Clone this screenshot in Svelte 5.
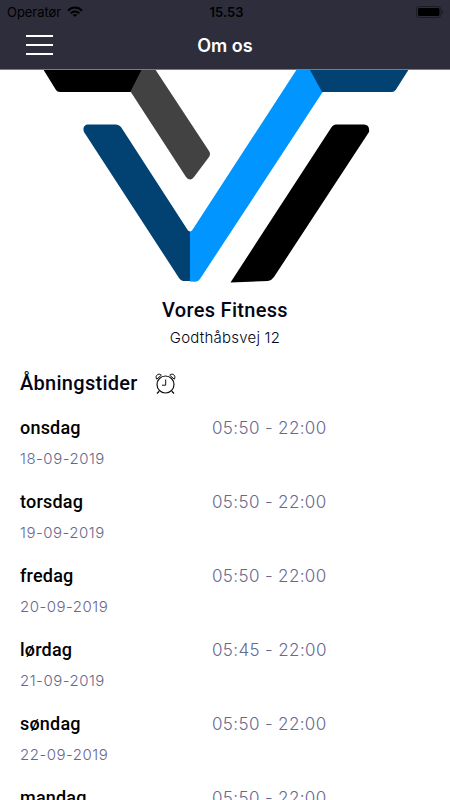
<script lang="ts">
	// Opening hours for the coming days
	const openingHours = [
		{ day: 'onsdag', date: '18-09-2019', hours: '05:50 - 22:00' },
		{ day: 'torsdag', date: '19-09-2019', hours: '05:50 - 22:00' },
		{ day: 'fredag', date: '20-09-2019', hours: '05:50 - 22:00' },
		{ day: 'lørdag', date: '21-09-2019', hours: '05:45 - 22:00' },
		{ day: 'søndag', date: '22-09-2019', hours: '05:50 - 22:00' },
		{ day: 'mandag', date: '23-09-2019', hours: '05:50 - 22:00' }
	];
</script>

<div class="screen">
	<header>
		<div class="status-bar">
			<div class="carrier">
				<span>Operatør</span>
				<svg width="16" height="12" viewBox="0 0 16 12" fill="none" stroke="#000" stroke-width="2">
					<path d="M1 4.7C5 .5 11 .5 15 4.7" />
					<path d="M3.6 7.4C6.2 4.8 9.8 4.8 12.4 7.4" />
					<path d="M8 11L5.7 8.8C7 7.6 9 7.6 10.3 8.8Z" fill="#000" stroke="none" />
				</svg>
			</div>
			<span class="clock">15.53</span>
			<svg class="battery" width="28" height="12" viewBox="0 0 28 12">
				<rect x=".5" y=".5" width="24.5" height="11" rx="3" fill="none" stroke="#1b1b24" />
				<rect x="2" y="2" width="21.5" height="8" rx="1.6" />
				<path d="M26.2 4C27.6 4.6 27.6 7.4 26.2 8Z" fill="#1b1b24" />
			</svg>
		</div>
		<div class="nav-bar">
			<button class="menu" aria-label="Menu">
				<span></span>
				<span></span>
				<span></span>
			</button>
			<h1>Om os</h1>
		</div>
	</header>

	<main>
		<svg class="logo" width="450" height="216" viewBox="0 70 450 216">
			<path fill="#000" d="M43 69H143L131 92H60Q57 92 56 90Z" />
			<path fill="#424242" d="M142 69H155L209 151Q211 154 209 157L194 177Q190 182 186 177L130.500 91.500Z" />
			<path fill="#014272" d="M87 124.500H116Q119 124.500 121 127L187 229Q188 231 190 231.500V281H183Q181 281 179 278L84 132Q82 126 87 124.500Z" />
			<path fill="#0095ff" d="M190 231.500Q192 231 193 229L297 69H311L323 91.500L200 279Q198 282 195 281.800L190 281.500Z" />
			<path fill="#014272" d="M309.500 69H409L396 89.500Q394 92 392 92H322Z" />
			<path fill="#000" d="M336 124.500H364Q370 125 369 132L274 277Q272 280 268 281L230.500 282.500L331 128Q333 124.500 336 124.500Z" />
		</svg>

		<h2 class="name">Vores Fitness</h2>
		<p class="address">Godthåbsvej 12</p>

		<section>
			<div class="section-title">
				<h2>Åbningstider</h2>
				<svg width="22" height="22" viewBox="0 0 22 22" fill="none" stroke="#111" stroke-width="1">
					<circle cx="10.500" cy="11.500" r="8.500" stroke-width="1.200" />
					<path d="M10.700 6.500V12.200H7" />
					<path d="M1.700 6.200C-.5 3 3.500-.7 6.300 2.200Z" />
					<path d="M19.300 6.200C21.500 3 17.500-.7 14.700 2.200Z" />
					<path d="M4.200 18.200L2 20.500M16.800 18.200L19 20.500" stroke-width="1.300" />
				</svg>
			</div>

			<ul>
				{#each openingHours as entry}
					<li>
						<div>
							<div class="day">{entry.day}</div>
							<div class="date">{entry.date}</div>
						</div>
						<div class="hours">{entry.hours}</div>
					</li>
				{/each}
			</ul>
		</section>
	</main>
</div>

<style>
	:global(body) {
		margin: 0;
		background: #fff;
		overflow: hidden;
	}

	.screen {
		width: 450px;
		height: 800px;
		overflow: hidden;
		font-family: Roboto, sans-serif;
		color: #050514;
	}

	header {
		height: 69px;
		background: #2d2d3b;
		border-bottom: 1px solid #7c7c84;
	}

	.status-bar {
		display: grid;
		grid-template-columns: 1fr auto 1fr;
		align-items: center;
		height: 23px;
		padding: 0 6px 0 7px;
		font-family: Inter, sans-serif;
		color: #000;
	}

	.carrier {
		display: flex;
		align-items: center;
		gap: 6px;
		font-size: 13px;
		line-height: 22px;
		letter-spacing: -0.05px;
	}

	.clock {
		padding-left: 2px;
		font-size: 13px;
		font-weight: 600;
		line-height: 22px;
	}

	.battery {
		justify-self: end;
	}

	.nav-bar {
		display: grid;
		grid-template-columns: 1fr auto 1fr;
		align-items: center;
		height: 46px;
	}

	.menu {
		display: flex;
		flex-direction: column;
		gap: 7px;
		width: 27px;
		margin: 0 0 2px 26px;
		padding: 0;
		border: 0;
		background: none;
	}

	.menu span {
		height: 2px;
		background: #fff;
	}

	h1 {
		margin: 0;
		font-family: Inter, sans-serif;
		font-size: 18px;
		font-weight: 600;
		line-height: 46px;
		color: #fff;
	}

	.logo {
		display: block;
	}

	.name,
	.address {
		margin: 0;
		text-align: center;
	}

	.name {
		margin-top: 12px;
		font-size: 20px;
		font-weight: 500;
		line-height: 24px;
		letter-spacing: 0.3px;
	}

	.address {
		margin-top: 6px;
		font-family: Inter, sans-serif;
		font-size: 15px;
		font-weight: 300;
		line-height: 20px;
		letter-spacing: 0.22px;
	}

	section {
		padding: 0 20px;
	}

	.section-title {
		display: flex;
		align-items: center;
		gap: 17px;
		height: 26px;
		margin-top: 23px;
	}

	.section-title h2 {
		margin: 0;
		padding-bottom: 2px;
		font-size: 20px;
		font-weight: 500;
		line-height: 26px;
		letter-spacing: 0.28px;
	}

	ul {
		margin: 18px 0 0;
		padding: 0;
		list-style: none;
	}

	li {
		display: grid;
		grid-template-columns: 192px 1fr;
		height: 74px;
	}

	.day {
		font-size: 18px;
		font-weight: 500;
		line-height: 26px;
		letter-spacing: 0.2px;
		color: #000;
	}

	.date {
		margin-top: 8px;
		font-family: Inter, sans-serif;
		font-size: 15px;
		font-weight: 300;
		line-height: 20px;
		letter-spacing: 0.5px;
		color: #66698f;
	}

	.hours {
		font-family: Inter, sans-serif;
		font-size: 17px;
		font-weight: 300;
		line-height: 26px;
		letter-spacing: 0.36px;
		color: #66698f;
	}
</style>
